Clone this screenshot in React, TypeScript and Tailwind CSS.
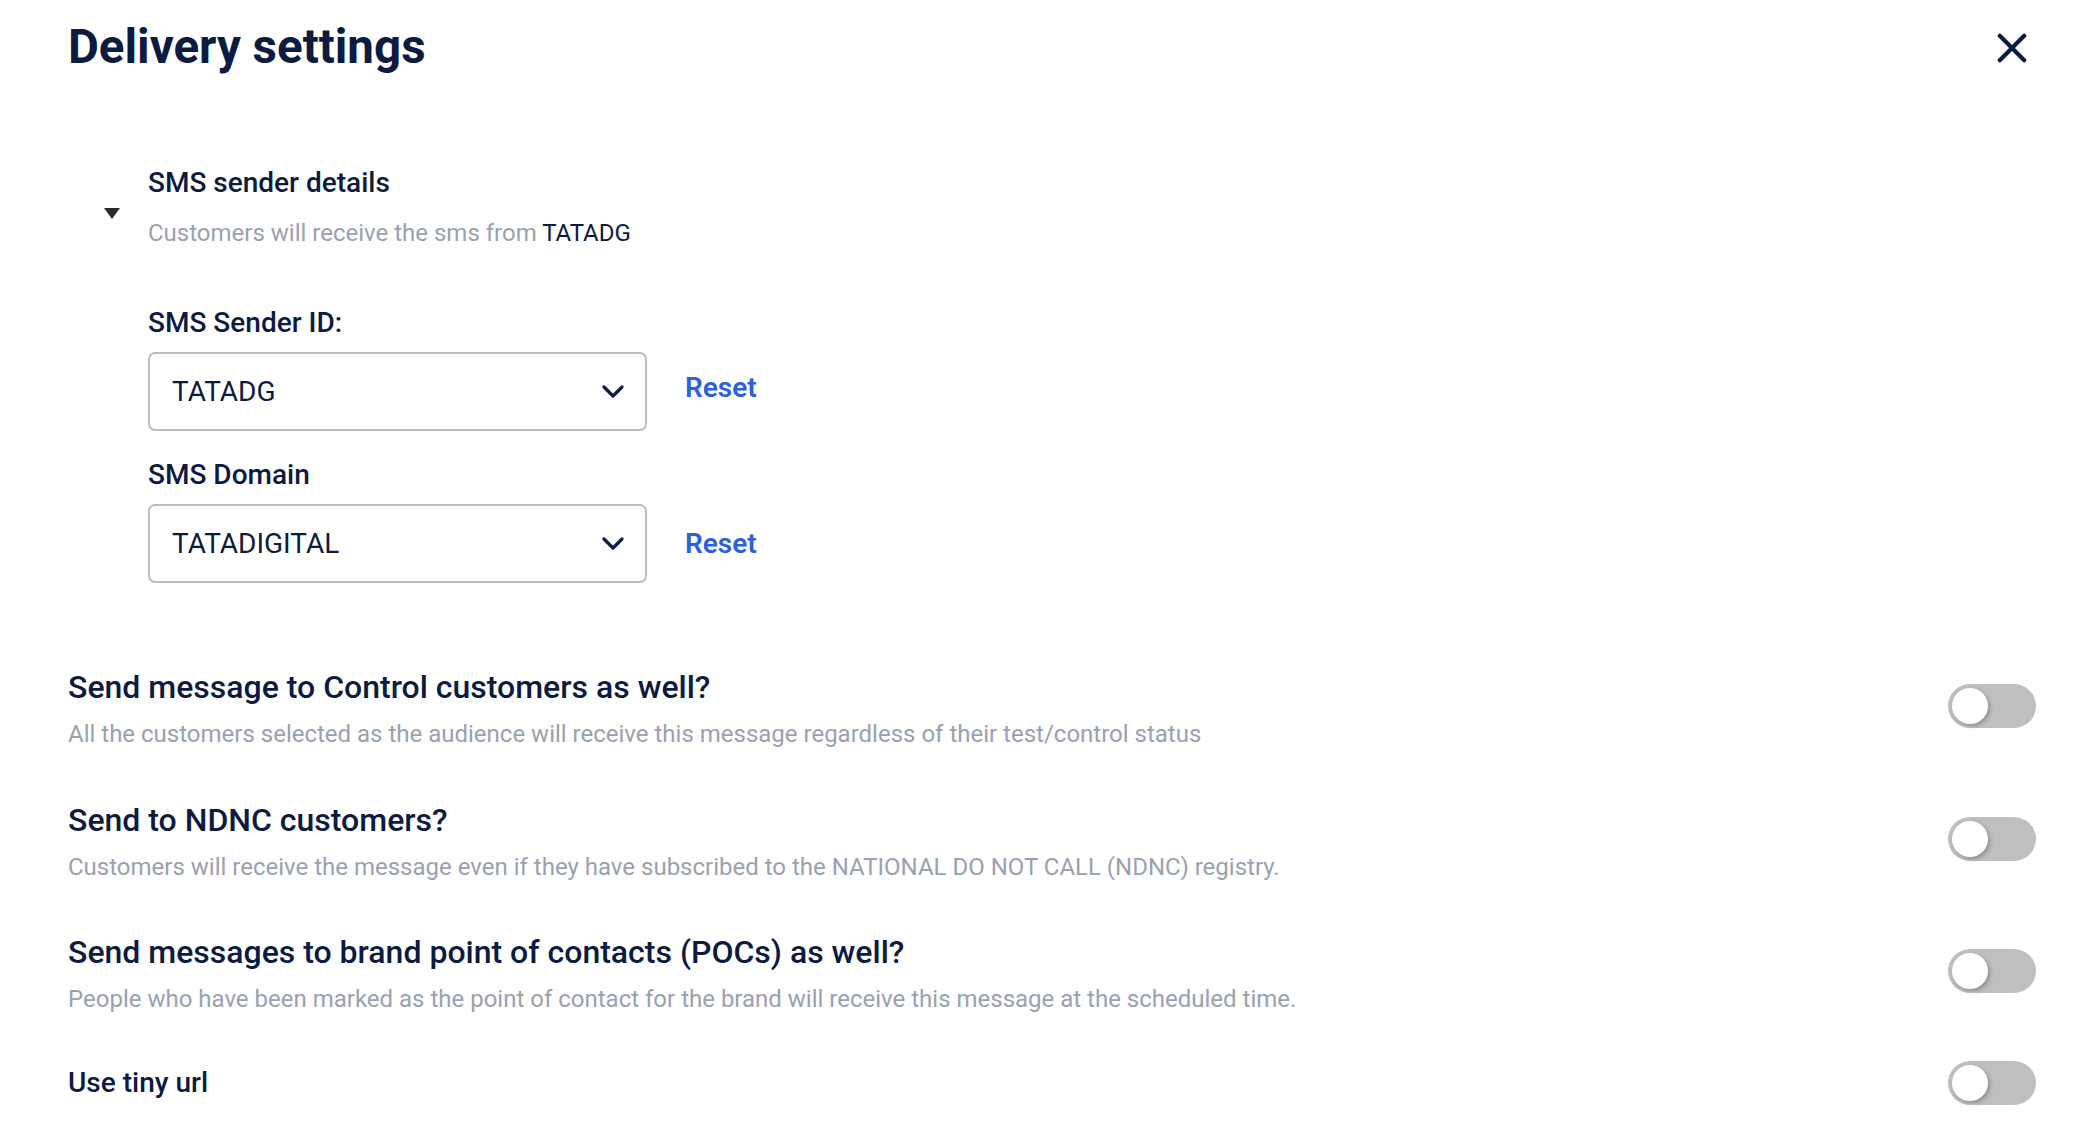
import React from 'react';

const font = { fontFamily: 'Roboto, "Liberation Sans", sans-serif' };

function Chevron() {
  return (
    <svg width="22" height="13" viewBox="0 0 22 13" fill="none">
      <path d="M2 2l9 9 9-9" stroke="#0c1b3f" strokeWidth="3.2" strokeLinecap="round" strokeLinejoin="round" />
    </svg>
  );
}

function Select({ value }: { value: string }) {
  return (
    <div className="w-[499px] h-[79px] rounded-[7px] border-2 border-[#b9bdc7] bg-white flex items-center justify-between pl-[22px] pr-[21px]">
      <span className="text-[28px] leading-[32px] text-[#0c1b3f]">{value}</span>
      <Chevron />
    </div>
  );
}

function Toggle({ className }: { className?: string }) {
  return (
    <div className={`w-[88px] h-[44px] rounded-full bg-[#bfbfbf] p-[4px] shrink-0 ${className ?? ''}`}>
      <div className="w-[36px] h-[36px] rounded-full bg-white shadow-[2px_2px_4px_rgba(0,0,0,0.25)]" />
    </div>
  );
}

function SettingRow({ title, desc, className }: { title: string; desc?: string; className?: string }) {
  return (
    <div className={`flex items-center justify-between ${className ?? ''}`}>
      <div className="flex flex-col">
        <div className={`${desc ? 'text-[32px]' : 'text-[28px]'} leading-[36px] font-medium text-[#0c1b3f]`}>{title}</div>
        {desc && <div className="mt-[14px] text-[24px] leading-[30px] text-[#9aa1b0]">{desc}</div>}
      </div>
      <Toggle className={desc ? '-mt-[7px]' : ''} />
    </div>
  );
}

export default function App() {
  return (
    <div style={font} className="w-[2092px] h-[1126px] bg-white pl-[68px] pr-[56px] overflow-hidden">
      <div className="flex items-start justify-between pt-[19px]">
        <h1 className="text-[47.5px] leading-[56px] font-bold text-[#0c1b3f]">Delivery settings</h1>
        <button className="mt-[14px] mr-[9px] w-[30px] h-[30px] flex items-center justify-center">
          <svg width="32" height="32" viewBox="0 0 32 32" fill="none">
            <path d="M3 3l26 26M29 3L3 29" stroke="#0c1b3f" strokeWidth="4.5" strokeLinecap="round" />
          </svg>
        </button>
      </div>

      <div className="mt-[92px] flex">
        <div className="w-[80px] flex items-center pl-[36px]">
          <svg className="mt-[11px]" width="16" height="11" viewBox="0 0 16 11">
            <path d="M0 0h16L8 11z" fill="#2b2b2b" />
          </svg>
        </div>
        <div className="flex flex-col">
          <div className="text-[28px] leading-[32px] font-medium text-[#0c1b3f]">SMS sender details</div>
          <div className="mt-[19px] text-[24px] leading-[30px] text-[#9aa1b0]">
            Customers will receive the sms from <span className="text-[#0c1b3f]">TATADG</span>
          </div>
        </div>
      </div>

      <div className="ml-[80px] mt-[59px] flex flex-col">
        <div className="text-[28px] leading-[32px] font-medium text-[#0c1b3f]">SMS Sender ID:</div>
        <div className="mt-[13px] flex items-center">
          <Select value="TATADG" />
          <button className="ml-[38px] text-[28px] leading-[32px] font-semibold text-[#2d60dd] -mt-[7px]">Reset</button>
        </div>
        <div className="mt-[28px] text-[28px] leading-[32px] font-medium text-[#0c1b3f]">SMS Domain</div>
        <div className="mt-[13px] flex items-center">
          <Select value="TATADIGITAL" />
          <button className="ml-[38px] text-[28px] leading-[32px] font-semibold text-[#2d60dd]">Reset</button>
        </div>
      </div>

      <SettingRow
        className="mt-[86px]"
        title="Send message to Control customers as well?"
        desc="All the customers selected as the audience will receive this message regardless of their test/control status"
      />
      <SettingRow
        className="mt-[53px]"
        title="Send to NDNC customers?"
        desc="Customers will receive the message even if they have subscribed to the NATIONAL DO NOT CALL (NDNC) registry."
      />
      <SettingRow
        className="mt-[52px]"
        title="Send messages to brand point of contacts (POCs) as well?"
        desc="People who have been marked as the point of contact for the brand will receive this message at the scheduled time."
      />
      <SettingRow className="mt-[47px]" title="Use tiny url" />
    </div>
  );
}
